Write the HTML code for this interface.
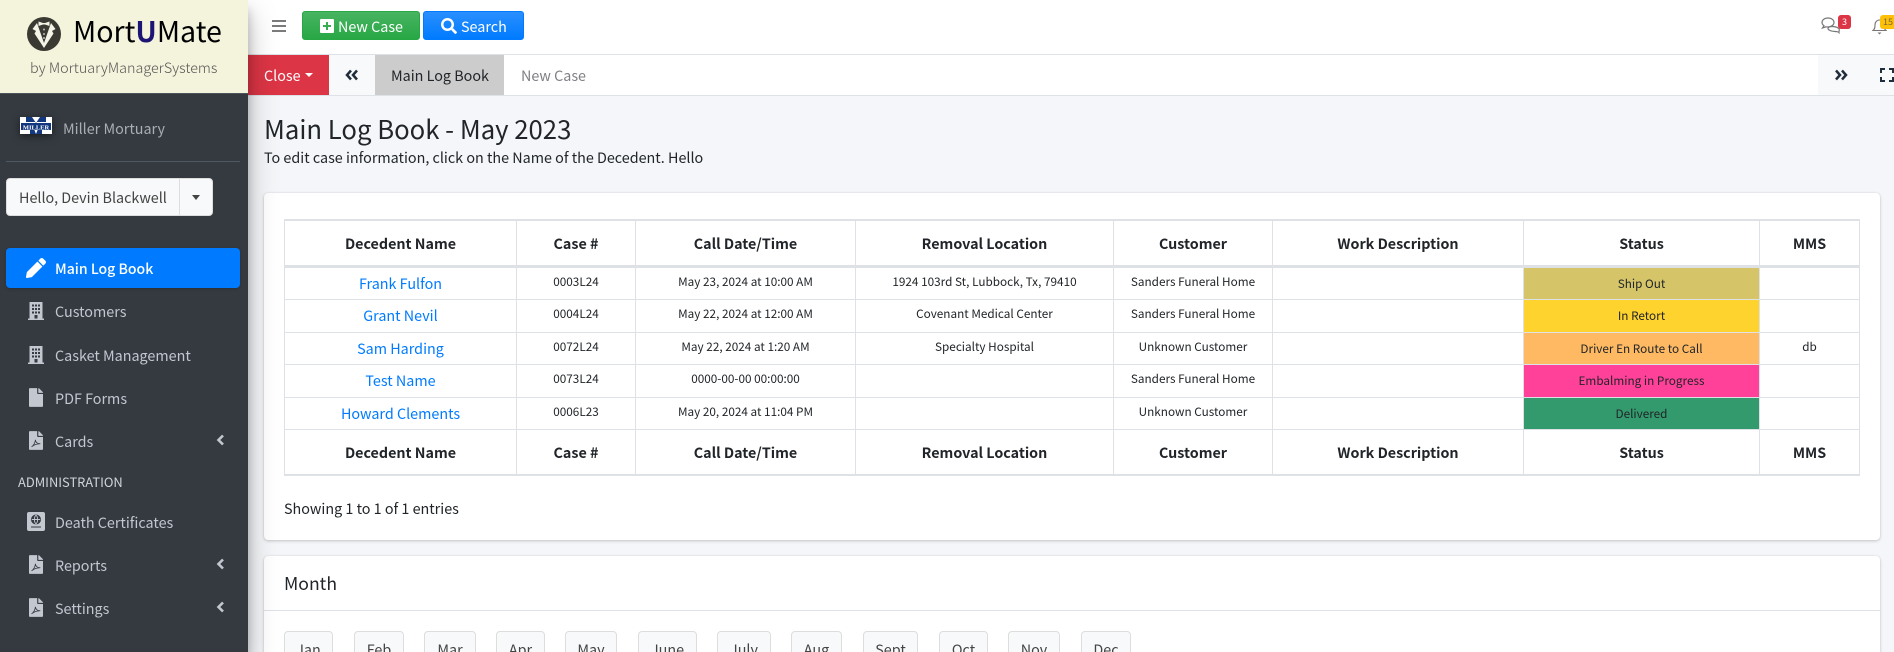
<!DOCTYPE html>
<html lang="en"><head><meta charset="utf-8"><title>Main Log Book</title>
<style>
*{box-sizing:border-box}
html,body{margin:0;padding:0;width:1894px;height:652px;overflow:hidden}
body{position:relative;background:#f4f6f9;color:#212529;font-family:"Noto Sans CJK JP","Liberation Sans",sans-serif;font-size:14.35px}
.t{position:absolute;white-space:nowrap;line-height:24px}
.abs{position:absolute}
a{color:#007bff;text-decoration:none}
#side{position:absolute;left:0;top:0;width:248px;height:652px;background:#343a40;box-shadow:0 14px 28px rgba(0,0,0,.25),0 10px 10px rgba(0,0,0,.22);z-index:5}
#brand{position:absolute;left:0;top:0;width:248px;height:94px;background:#f4f4dc;border-bottom:1px solid #4b545c}
.nav{color:#c2c7d0}
.card{position:absolute;background:#fff;border-radius:4px;box-shadow:0 0 1px rgba(0,0,0,.125),0 1px 3px rgba(0,0,0,.2)}
table{position:absolute;left:284px;top:219px;width:1576px;border-collapse:separate;border-spacing:0;table-layout:fixed}
th,td{padding:0;text-align:center;vertical-align:middle;border-right:1px solid #dee2e6;border-bottom:1px solid #dee2e6;line-height:20px}
th:first-child,td:first-child{border-left:1px solid #dee2e6}
th{font-weight:700;font-size:14.3px;padding-top:2px}
thead th{height:49px;border-top:2px solid #dee2e6;border-bottom:3px solid #dee2e6}
tfoot th{height:46px;border-bottom:2px solid #dee2e6}
td{font-size:11.75px}
td.n{font-size:14.35px}
td.s{font-size:11.75px}
td.m{padding-bottom:4px}
.mb{position:absolute;top:631px;height:40px;background:#f8f9fa;border:1px solid #ddd;border-radius:4px;color:#444;text-align:center;line-height:36px;font-size:14.35px}
</style></head><body>

<div id="side">
  <div id="brand">
    <svg class="abs" style="left:27px;top:17px" width="34" height="34" viewBox="0 0 34 34">
      <circle cx="17" cy="17" r="17" fill="#3a3a32"/>
      <path d="M10 6L5.500 12L9 14L7.500 16.500L17 31L26.500 16.500L25 14L28.500 12L24 6L17 26Z" fill="#f4f4e8"/>
      <path d="M11.500 4.500L16 6H18L22.500 4.500V9L18 7.500H16L11.500 9Z" fill="#f4f4e8"/>
      <circle cx="17" cy="12.500" r="1" fill="#bbb"/><circle cx="17" cy="17" r="1" fill="#bbb"/><circle cx="17" cy="21" r="1" fill="#bbb"/>
    </svg>
    <div class="t" style="left:73px;top:15px;font-size:28.6px;line-height:32px;color:#000">Mort<b style="color:#1d1573">U</b>Mate</div>
    <div class="t" style="left:30px;top:56px;color:#555;font-weight:300">by MortuaryManagerSystems</div>
  </div>

  <svg class="abs" style="left:20px;top:117px;filter:drop-shadow(0 2px 4px rgba(0,0,0,.5))" width="32" height="17" viewBox="0 0 32 17">
    <rect width="32" height="17" fill="#fff"/>
    <path d="M6 0H12L16 6L20 0H26V5H6Z M10 12H14L16 17L18 12H22V17H10Z" fill="#14387f"/>
    <rect x="1" y="6" width="30" height="7" fill="#14387f"/>
    <text x="16" y="12.300" text-anchor="middle" font-family="Liberation Serif,serif" font-size="6.500" font-weight="700" fill="#fff">MILLER</text>
  </svg>
  <div class="t" style="left:63px;top:117px;color:#a9aeb5">Miller Mortuary</div>
  <div class="abs" style="left:6px;top:161px;width:234px;height:1px;background:#4f5962"></div>

  <div class="abs" style="left:6px;top:178px;width:207px;height:38px;background:#f8f9fa;border-radius:4px;border:1px solid #ddd"></div>
  <div class="abs" style="left:179px;top:178px;width:1px;height:38px;background:#ddd"></div>
  <div class="t" style="left:19px;top:186px;color:#444">Hello, Devin Blackwell</div>
  <div class="abs" style="left:192px;top:195px;border:4.500px solid transparent;border-top:5px solid #444;border-bottom:0"></div>

  <div class="abs" style="left:6px;top:248px;width:234px;height:40px;background:#007bff;border-radius:4px;box-shadow:0 1px 3px rgba(0,0,0,.2)"></div>
  <svg class="abs" style="left:26px;top:258px" width="20" height="20" viewBox="0 0 512 512"><path fill="#fff" d="M497.9 142.1l-46.1 46.1c-4.700 4.700-12.300 4.700-17 0l-111-111c-4.700-4.700-4.700-12.300 0-17l46.100-46.100c18.700-18.700 49.100-18.700 67.900 0l60.100 60.100c18.800 18.700 18.800 49.100 0 67.900zM284.200 99.800L21.600 362.400.4 483.900c-2.900 16.400 11.400 30.600 27.800 27.800l121.500-21.300 262.600-262.600c4.700-4.700 4.700-12.300 0-17l-111-111c-4.800-4.700-12.400-4.700-17.100 0z"/></svg>
  <div class="t" style="left:55px;top:257px;color:#fff;font-weight:500;font-size:14.1px">Main Log Book</div>

  <svg class="abs" style="left:28px;top:302px" width="16" height="18" viewBox="0 0 16 18"><path fill="#c2c7d0" fill-rule="evenodd" d="M1.500 0H14.500V16.500H16V18H0V16.500H1.500ZM4 2.500V4.500H6V2.500ZM7 2.500V4.500H9V2.500ZM10 2.500V4.500H12V2.500ZM4 6V8H6V6ZM7 6V8H9V6ZM10 6V8H12V6ZM4 9.500V11.500H6V9.500ZM7 9.500V11.500H9V9.500ZM10 9.500V11.500H12V9.500ZM6.500 13V16.500H9.500V13Z"/></svg>
  <div class="t nav" style="left:55px;top:300px">Customers</div>

  <svg class="abs" style="left:28px;top:346px" width="16" height="18" viewBox="0 0 16 18"><path fill="#c2c7d0" fill-rule="evenodd" d="M1.500 0H14.500V16.500H16V18H0V16.500H1.500ZM4 2.500V4.500H6V2.500ZM7 2.500V4.500H9V2.500ZM10 2.500V4.500H12V2.500ZM4 6V8H6V6ZM7 6V8H9V6ZM10 6V8H12V6ZM4 9.500V11.500H6V9.500ZM7 9.500V11.500H9V9.500ZM10 9.500V11.500H12V9.500ZM6.500 13V16.500H9.500V13Z"/></svg>
  <div class="t nav" style="left:55px;top:344px">Casket Management</div>

  <svg class="abs" style="left:29px;top:388px" width="14" height="19" viewBox="0 0 384 512"><path fill="#c2c7d0" d="M224 136V0H24C10.700 0 0 10.700 0 24v464c0 13.300 10.700 24 24 24h336c13.300 0 24-10.700 24-24V160H248c-13.200 0-24-10.800-24-24zm160-14.100v6.100H256V0h6.100c6.400 0 12.500 2.500 17 7l97.900 98c4.500 4.500 7 10.600 7 16.900z"/></svg>
  <div class="t nav" style="left:55px;top:387px">PDF Forms</div>

  <svg class="abs" style="left:29px;top:431px" width="14" height="19" viewBox="0 0 384 512"><path fill="#c2c7d0" d="M224 136V0H24C10.700 0 0 10.700 0 24v464c0 13.300 10.700 24 24 24h336c13.300 0 24-10.700 24-24V160H248c-13.200 0-24-10.800-24-24zm160-14.100v6.100H256V0h6.100c6.400 0 12.500 2.500 17 7l97.900 98c4.500 4.500 7 10.600 7 16.900z"/><path fill="none" stroke="#343a40" stroke-width="22" d="M70 430C130 390 175 300 175 235C175 300 230 350 310 345C240 345 140 370 70 430Z"/></svg>
  <div class="t nav" style="left:55px;top:430px">Cards</div>
  <svg class="abs" style="left:216px;top:434px" width="9" height="12" viewBox="0 0 9 12"><path d="M7 1.500L2.500 6L7 10.500" fill="none" stroke="#c2c7d0" stroke-width="2.600"/></svg>

  <div class="t" style="left:18px;top:470px;font-size:12.9px;color:#d0d4db">ADMINISTRATION</div>

  <svg class="abs" style="left:27px;top:512px" width="18" height="19" viewBox="0 0 18 19"><path fill="#c2c7d0" fill-rule="evenodd" d="M2 0H16A2 2 0 0 1 18 2V17A2 2 0 0 1 16 19H2A2 2 0 0 1 0 17V2A2 2 0 0 1 2 0ZM9 2.500A5 5 0 1 0 9 12.500A5 5 0 0 0 9 2.500ZM4 14.500V15.500H14V14.500Z"/><path d="M4.800 7.500H13.200M9 3C6.800 5.500 6.800 9.500 9 12C11.200 9.500 11.200 5.500 9 3" stroke="#c2c7d0" fill="none" stroke-width=".9"/></svg>
  <div class="t nav" style="left:55px;top:511px">Death Certificates</div>

  <svg class="abs" style="left:29px;top:555px" width="14" height="19" viewBox="0 0 384 512"><path fill="#c2c7d0" d="M224 136V0H24C10.700 0 0 10.700 0 24v464c0 13.300 10.700 24 24 24h336c13.300 0 24-10.700 24-24V160H248c-13.200 0-24-10.800-24-24zm160-14.100v6.100H256V0h6.100c6.400 0 12.500 2.500 17 7l97.900 98c4.500 4.500 7 10.600 7 16.900z"/><path fill="none" stroke="#343a40" stroke-width="22" d="M70 430C130 390 175 300 175 235C175 300 230 350 310 345C240 345 140 370 70 430Z"/></svg>
  <div class="t nav" style="left:55px;top:554px">Reports</div>
  <svg class="abs" style="left:216px;top:558px" width="9" height="12" viewBox="0 0 9 12"><path d="M7 1.500L2.500 6L7 10.500" fill="none" stroke="#c2c7d0" stroke-width="2.600"/></svg>

  <svg class="abs" style="left:29px;top:598px" width="14" height="19" viewBox="0 0 384 512"><path fill="#c2c7d0" d="M224 136V0H24C10.700 0 0 10.700 0 24v464c0 13.300 10.700 24 24 24h336c13.300 0 24-10.700 24-24V160H248c-13.200 0-24-10.800-24-24zm160-14.100v6.100H256V0h6.100c6.400 0 12.500 2.500 17 7l97.900 98c4.500 4.500 7 10.600 7 16.900z"/><path fill="none" stroke="#343a40" stroke-width="22" d="M70 430C130 390 175 300 175 235C175 300 230 350 310 345C240 345 140 370 70 430Z"/></svg>
  <div class="t nav" style="left:55px;top:597px">Settings</div>
  <svg class="abs" style="left:216px;top:601px" width="9" height="12" viewBox="0 0 9 12"><path d="M7 1.500L2.500 6L7 10.500" fill="none" stroke="#c2c7d0" stroke-width="2.600"/></svg>
</div>

<!-- top bar -->
<div class="abs" style="left:248px;top:0;width:1646px;height:55px;background:#fff;border-bottom:1px solid #dee2e6"></div>
<svg class="abs" style="left:272px;top:20px" width="14" height="12" viewBox="0 0 14 12"><path d="M0 0H14V2H0ZM0 5H14V7H0ZM0 10H14V12H0Z" fill="#7b7b7b"/></svg>
<div class="abs" style="left:302px;top:11px;width:118px;height:29px;border-radius:3px;background:linear-gradient(180deg,#48b461,#28a745);border:1px solid #28a745"></div>
<svg class="abs" style="left:320px;top:19px" width="14" height="14" viewBox="0 0 14 14"><path fill="#fff" fill-rule="evenodd" d="M1 0H13A1 1 0 0 1 14 1V13A1 1 0 0 1 13 14H1A1 1 0 0 1 0 13V1A1 1 0 0 1 1 0ZM6 3V6H3V8H6V11H8V8H11V6H8V3Z"/></svg>
<div class="t" style="left:338px;top:15px;color:#fff">New Case</div>
<div class="abs" style="left:423px;top:11px;width:101px;height:29px;border-radius:3px;background:linear-gradient(180deg,#2a8fff,#007bff);border:1px solid #007bff"></div>
<svg class="abs" style="left:441px;top:18px" width="16" height="16" viewBox="0 0 512 512"><path fill="#fff" d="M505 442.700L405.300 343c-4.500-4.500-10.600-7-17-7H372c27.600-35.300 44-79.700 44-128C416 93.100 322.900 0 208 0S0 93.100 0 208s93.100 208 208 208c48.300 0 92.700-16.400 128-44v16.300c0 6.400 2.500 12.500 7 17l99.700 99.700c9.400 9.400 24.600 9.400 33.900 0l28.300-28.300c9.400-9.400 9.400-24.600.1-34zM208 336c-70.700 0-128-57.200-128-128 0-70.700 57.200-128 128-128 70.700 0 128 57.200 128 128 0 70.700-57.200 128-128 128z"/></svg>
<div class="t" style="left:461px;top:15px;color:#fff">Search</div>

<svg class="abs" style="left:1821px;top:17px" width="20" height="17" viewBox="0 0 20 17"><g fill="#fff" stroke="#777" stroke-width="1.200"><path d="M8 8.500C4 8.500 2.500 11 6 12.500C9 14 14 13 15 14.500C15 12 16 11 14 10C12 8.500 10 8.500 8 8.500Z" transform="translate(3 1)"/><path d="M7 1C3.500 1 1 3 1 5.500C1 7 2 8 3 8.700L1.500 11L5 9.800C9 10.500 13 8.500 13 5.500C13 3 10.500 1 7 1Z"/></g></svg>
<div class="abs" style="left:1838px;top:15px;width:13px;height:14px;background:#dc3545;border-radius:3px;color:#fff;font-size:9px;line-height:13px;text-align:center">3</div>
<svg class="abs" style="left:1872px;top:18px" width="15" height="17" viewBox="0 0 15 17"><path d="M1 12.500C3 11 3 9 3 7C3 4 5 2 7.500 2C10 2 12 4 12 7C12 9 12 11 14 12.500Z" fill="none" stroke="#777" stroke-width="1.100"/><path d="M5.500 14.500H9.500L7.500 16.500Z" fill="#777"/></svg>
<div class="abs" style="left:1880px;top:15px;width:20px;height:14px;background:#ffc107;border-radius:3px;color:#77663a;font-size:9px;line-height:13px;padding-left:3px">15</div>

<!-- tab bar -->
<div class="abs" style="left:248px;top:55px;width:1646px;height:41px;background:#fff;border-bottom:1px solid #dee2e6"></div>
<div class="abs" style="left:248px;top:55px;width:81px;height:40px;background:#dc3545"></div>
<div class="t" style="left:264px;top:64px;color:#fff">Close</div>
<div class="abs" style="left:305px;top:73px;border:4px solid transparent;border-top:4.500px solid #fff;border-bottom:0"></div>
<div class="abs" style="left:329px;top:55px;width:46px;height:40px;background:#f8f9fa"></div>
<svg class="abs" style="left:345px;top:69px" width="14" height="12" viewBox="0 0 14 12"><path d="M6 1.500L2 6L6 10.500M12 1.500L8 6L12 10.500" fill="none" stroke="#1f2d3d" stroke-width="2.500"/></svg>
<div class="abs" style="left:375px;top:55px;width:129px;height:40px;background:#ccc"></div>
<div class="t" style="left:391px;top:64px">Main Log Book</div>
<div class="t" style="left:521px;top:64px;color:#7f7f85">New Case</div>
<div class="abs" style="left:1818px;top:55px;width:76px;height:40px;background:#f8f9fa"></div>
<svg class="abs" style="left:1834px;top:69px" width="14" height="12" viewBox="0 0 14 12"><path d="M2 1.500L6 6L2 10.500M8 1.500L12 6L8 10.500" fill="none" stroke="#1f2d3d" stroke-width="2.500"/></svg>
<svg class="abs" style="left:1880px;top:68px" width="14" height="14" viewBox="0 0 14 14"><path d="M1 5V1H5M9 1H13V5M13 9V13H9M5 13H1V9" fill="none" stroke="#1f2d3d" stroke-width="2"/></svg>

<!-- heading -->
<div class="t" style="left:264px;top:112px;font-size:25.7px;line-height:34px">Main Log Book - May 2023</div>
<div class="t" style="left:264px;top:146px">To edit case information, click on the Name of the Decedent. Hello</div>

<!-- card 1 -->
<div class="card" style="left:264px;top:193px;width:1616px;height:347px"></div>
<table>
<colgroup><col style="width:233px"><col style="width:119px"><col style="width:220px"><col style="width:258px"><col style="width:159px"><col style="width:251px"><col style="width:236px"><col style="width:100px"></colgroup>
<thead><tr><th>Decedent Name</th><th>Case #</th><th>Call Date/Time</th><th>Removal Location</th><th>Customer</th><th>Work Description</th><th>Status</th><th>MMS</th></tr></thead>
<tbody>
<tr style="height:32px"><td class="n"><a href="#">Frank Fulfon</a></td><td class="m">0003L24</td><td class="m">May 23, 2024 at 10:00 AM</td><td class="m">1924 103rd St, Lubbock, Tx, 79410</td><td class="m">Sanders Funeral Home</td><td></td><td class="s" style="background:#d5c468">Ship Out</td><td></td></tr>
<tr style="height:33px"><td class="n"><a href="#">Grant Nevil</a></td><td class="m">0004L24</td><td class="m">May 22, 2024 at 12:00 AM</td><td class="m">Covenant Medical Center</td><td class="m">Sanders Funeral Home</td><td></td><td class="s" style="background:#ffd32e">In Retort</td><td></td></tr>
<tr style="height:32px"><td class="n"><a href="#">Sam Harding</a></td><td class="m">0072L24</td><td class="m">May 22, 2024 at 1:20 AM</td><td class="m">Specialty Hospital</td><td class="m">Unknown Customer</td><td></td><td class="s" style="background:#ffb962">Driver En Route to Call</td><td class="m">db</td></tr>
<tr style="height:33px"><td class="n"><a href="#">Test Name</a></td><td class="m">0073L24</td><td class="m">0000-00-00 00:00:00</td><td class="m"></td><td class="m">Sanders Funeral Home</td><td></td><td class="s" style="background:#ff4199">Embalming in Progress</td><td></td></tr>
<tr style="height:32px"><td class="n"><a href="#">Howard Clements</a></td><td class="m">0006L23</td><td class="m">May 20, 2024 at 11:04 PM</td><td class="m"></td><td class="m">Unknown Customer</td><td></td><td class="s" style="background:#339a6e">Delivered</td><td></td></tr>
</tbody>
<tfoot><tr><th>Decedent Name</th><th>Case #</th><th>Call Date/Time</th><th>Removal Location</th><th>Customer</th><th>Work Description</th><th>Status</th><th>MMS</th></tr></tfoot>
</table>
<div class="t" style="left:284px;top:497px">Showing 1 to 1 of 1 entries</div>

<!-- card 2 -->
<div class="card" style="left:264px;top:556px;width:1616px;height:120px"></div>
<div class="abs" style="left:264px;top:610px;width:1616px;height:1px;background:#dee2e6"></div>
<div class="t" style="left:284px;top:572px;font-size:17.6px">Month</div>
<div class="mb" style="left:284px;width:49px">Jan</div>
<div class="mb" style="left:354px;width:50px">Feb</div>
<div class="mb" style="left:424px;width:52px">Mar</div>
<div class="mb" style="left:496px;width:49px">Apr</div>
<div class="mb" style="left:565px;width:52px">May</div>
<div class="mb" style="left:638px;width:59px">June</div>
<div class="mb" style="left:717px;width:54px">July</div>
<div class="mb" style="left:791px;width:51px">Aug</div>
<div class="mb" style="left:863px;width:55px">Sept</div>
<div class="mb" style="left:939px;width:49px">Oct</div>
<div class="mb" style="left:1008px;width:52px">Nov</div>
<div class="mb" style="left:1081px;width:50px">Dec</div>
</body></html>
